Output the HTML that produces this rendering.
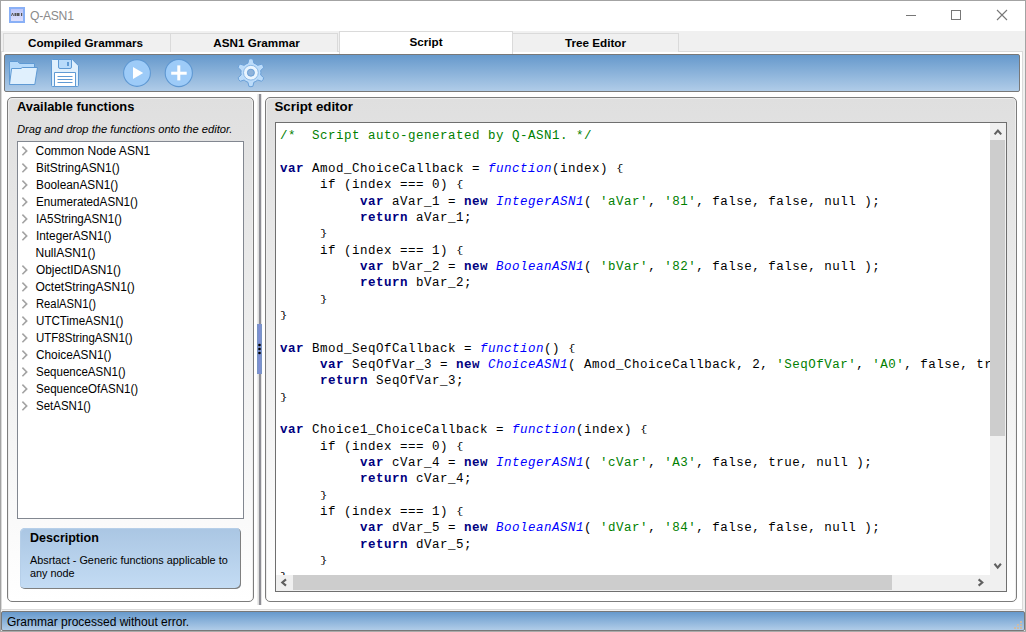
<!DOCTYPE html>
<html><head><meta charset="utf-8">
<style>
*{box-sizing:border-box;margin:0;padding:0}
html,body{width:1026px;height:632px;overflow:hidden;background:#fff;font-family:"Liberation Sans",sans-serif;}
.a{position:absolute}
#win{position:absolute;left:0;top:0;width:1026px;height:632px;border:1px solid #a3a3a3;border-bottom-color:#aaaaaa;background:linear-gradient(#fff 31px,#f0f0f0 31px)}
#tabbar{left:1px;top:31px;width:1024px;height:21px;background:#f0f0f0}
.tab{position:absolute;top:33px;height:19px;border:1px solid #dadada;border-bottom:none;background:#f0f0f0;font-weight:bold;font-size:11.7px;color:#000;text-align:center;line-height:18px}
.tab.sel{top:31px;height:23px;background:#fff;line-height:20px}
#pane{left:1px;top:51px;width:1022px;height:559px;border:1px solid #dadada;background:#fff}
#toolbar{left:4px;top:54px;width:1016px;height:38px;border:1px solid #787878;border-radius:2px;background:linear-gradient(#6699cc,#b0cce8)}
.panel{position:absolute;top:97px;height:505px;border:1px solid #7c7c7c;border-radius:5px;background:linear-gradient(#dfdfdf,#ffffff);box-shadow:inset 1px 1px 0 #eeeeee, inset -1px 0 0 #eeeeee}
.ptitle{position:absolute;font-weight:bold;font-size:13px;color:#000}
#tree{left:17px;top:141px;width:227px;height:378px;border:1px solid #828790;background:#fff}
.ti{position:absolute;left:35.5px;font-size:12px;margin-top:1px;color:#000;white-space:nowrap}
.chev{position:absolute;left:21px;width:7px;height:10px}
#desc{left:20px;top:528px;width:221px;height:61px;border-radius:5px;background:linear-gradient(#aac6e3,#c4dcf4);box-shadow:inset -1px -1px 0 #7f7f7f, inset 1px 1px 0 #b6cfe9}
#editor{left:275px;top:122px;width:732px;height:470px;border:1px solid #6f6f6f;background:#fff;overflow:hidden}
#code{position:absolute;left:4px;top:5.3px;font-family:"Liberation Mono",monospace;font-size:12.5px;letter-spacing:0.5px;line-height:16.33px;white-space:pre;color:#000}
.k{color:#000080;font-weight:bold}
.f{color:#0000ff;font-style:italic}
.s{color:#008000}
.c{color:#008000}
.b{display:inline-block;transform:translateY(-0.7px) scaleY(0.78);transform-origin:50% 55%}
#status{left:1px;top:611px;width:1024px;height:20px;border:1px solid #787878;border-radius:2px;background:linear-gradient(#6699cc,#b0cce8);font-size:12px;color:#000;padding-left:5px;line-height:20px}
</style></head><body>
<div id="win"></div>
<!-- title bar -->
<div class="a" style="left:9px;top:7px;width:16px;height:16px;background:#89b0f6;"></div>
<div class="a" style="left:11px;top:9px;width:12px;height:12px;background:linear-gradient(#bdc6f8,#dfe0fb);"></div>
<svg class="a" style="left:0;top:0" width="30" height="30"><g fill="#555"><path d="M11 16L12 13H13L14 16H13.2L12.5 14L11.8 16Z"/><rect x="14.5" y="13" width="2" height="3"/><rect x="17" y="13" width="2.5" height="3"/><rect x="21" y="13" width="1.2" height="3"/></g></svg>
<div class="a" style="left:29.5px;top:8px;font-size:13.5px;letter-spacing:-0.3px;color:#8a8a8a;transform:scaleX(0.9);transform-origin:0 0">Q-ASN1</div>
<div class="a" style="left:906px;top:15px;width:10px;height:1px;background:#777"></div>
<div class="a" style="left:951px;top:10px;width:10px;height:10px;border:1px solid #777"></div>
<svg class="a" style="left:996px;top:9px" width="12" height="12" viewBox="0 0 12 12"><path d="M1 1L11 11M11 1L1 11" stroke="#777" stroke-width="1.1"/></svg>

<div id="tabbar" class="a"></div>
<div id="pane" class="a"></div>
<div class="tab" style="left:3px;width:168px;padding-right:3px">Compiled Grammars</div>
<div class="tab" style="left:170px;width:168px;padding-left:5px">ASN1 Grammar</div>

<div class="tab sel" style="left:339px;width:174px">Script</div>
<div class="tab" style="left:512px;width:167px">Tree Editor</div>

<div id="toolbar" class="a"></div>
<svg class="a" style="left:0;top:0" width="300" height="95" viewBox="0 0 300 95">
<g stroke="#5f9ad4" stroke-width="1" stroke-linejoin="round">
<path d="M9.5 61.5H17.6L19.6 63.5H34.5V84.5H9.5Z" fill="#b8dbfb"/>
<path d="M11.6 68.5H21L22.2 67.5H37.5L34.8 84.5H9.5Z" fill="#e0f0fd"/>
<path d="M52.5 59.5H72.3L78.5 65.7V85.5Q78.5 86.5 77.5 86.5H52.5Q51.5 86.5 51.5 85.5V60.5Q51.5 59.5 52.5 59.5Z" fill="#e0f0fd"/>
<path d="M58.5 59.5H71.5V67Q71.5 68.5 70 68.5H60Q58.5 68.5 58.5 67Z" fill="#b8dbfb"/>
<rect x="54.5" y="72.5" width="21" height="14" fill="#ffffff"/>
</g>
<rect x="67" y="62" width="2" height="4" fill="#5f9ad4"/>
<path d="M57.5 76.5H72.5M57.5 79.5H72.5M57.5 82.5H72.5" stroke="#5f9ad4" stroke-width="1"/>
<circle cx="137" cy="73" r="13.4" fill="#9dcbf8" stroke="#5f98d2" stroke-width="1.1"/>
<path d="M133 67L143.2 73L133 79Z" fill="#fff"/>
<circle cx="178.8" cy="73" r="13.6" fill="#9dcbf8" stroke="#5f98d2" stroke-width="1.1"/>
<rect x="171.2" y="71.7" width="15.5" height="3" fill="#fff"/>
<rect x="177.3" y="65.4" width="3" height="15" fill="#fff"/>
<path d="M253.86 63.15 L252.95 59.15 Q250.90 58.20 248.85 59.15 L247.94 63.15 A10.0 10.0 0 0 0 244.10 65.36 L240.19 64.15 Q238.34 65.45 238.15 67.70 L241.15 70.48 A10.0 10.0 0 0 0 241.15 74.92 L238.15 77.70 Q238.34 79.95 240.19 81.25 L244.10 80.04 A10.0 10.0 0 0 0 247.94 82.25 L248.85 86.25 Q250.90 87.20 252.95 86.25 L253.86 82.25 A10.0 10.0 0 0 0 257.70 80.04 L261.61 81.25 Q263.46 79.95 263.65 77.70 L260.65 74.92 A10.0 10.0 0 0 0 260.65 70.48 L263.65 67.70 Q263.46 65.45 261.61 64.15 L257.70 65.36 A10.0 10.0 0 0 0 253.86 63.15 Z" fill="#bcdcfa" stroke="#6aa0d8" stroke-width="1" stroke-linejoin="round"/>
<circle cx="250.9" cy="72.7" r="7.4" fill="#eaf5fe" stroke="#8ab8e6" stroke-width="1"/>
<circle cx="250.9" cy="72.7" r="3.5" fill="#8fb3da" stroke="#6aa0d8" stroke-width="1"/>
</svg>

<div class="panel" style="left:7px;width:247px"></div>
<div class="ptitle" style="left:17px;top:99px;font-size:12.85px">Available functions</div>
<div class="a" style="left:17px;top:123px;font-size:11.2px;font-style:italic">Drag and drop the functions onto the editor.</div>
<div id="tree" class="a"></div>
<div class="ti" style="top:143px">Common Node ASN1</div>
<svg class="chev" style="top:146px" viewBox="0 0 7 10"><path d="M1.4 0.6L5.7 4.9L1.4 9.2" fill="none" stroke="#a3a3a3" stroke-width="1.6"/></svg>
<div class="ti" style="top:160px;transform:scaleX(0.987);transform-origin:0 0">BitStringASN1()</div>
<svg class="chev" style="top:163px" viewBox="0 0 7 10"><path d="M1.4 0.6L5.7 4.9L1.4 9.2" fill="none" stroke="#a3a3a3" stroke-width="1.6"/></svg>
<div class="ti" style="top:177px;transform:scaleX(0.985);transform-origin:0 0">BooleanASN1()</div>
<svg class="chev" style="top:180px" viewBox="0 0 7 10"><path d="M1.4 0.6L5.7 4.9L1.4 9.2" fill="none" stroke="#a3a3a3" stroke-width="1.6"/></svg>
<div class="ti" style="top:194px;transform:scaleX(0.973);transform-origin:0 0">EnumeratedASN1()</div>
<svg class="chev" style="top:197px" viewBox="0 0 7 10"><path d="M1.4 0.6L5.7 4.9L1.4 9.2" fill="none" stroke="#a3a3a3" stroke-width="1.6"/></svg>
<div class="ti" style="top:211px;transform:scaleX(0.969);transform-origin:0 0">IA5StringASN1()</div>
<svg class="chev" style="top:214px" viewBox="0 0 7 10"><path d="M1.4 0.6L5.7 4.9L1.4 9.2" fill="none" stroke="#a3a3a3" stroke-width="1.6"/></svg>
<div class="ti" style="top:228px;transform:scaleX(0.983);transform-origin:0 0">IntegerASN1()</div>
<svg class="chev" style="top:231px" viewBox="0 0 7 10"><path d="M1.4 0.6L5.7 4.9L1.4 9.2" fill="none" stroke="#a3a3a3" stroke-width="1.6"/></svg>
<div class="ti" style="top:245px">NullASN1()</div>
<div class="ti" style="top:262px;transform:scaleX(0.986);transform-origin:0 0">ObjectIDASN1()</div>
<svg class="chev" style="top:265px" viewBox="0 0 7 10"><path d="M1.4 0.6L5.7 4.9L1.4 9.2" fill="none" stroke="#a3a3a3" stroke-width="1.6"/></svg>
<div class="ti" style="top:279px">OctetStringASN1()</div>
<svg class="chev" style="top:282px" viewBox="0 0 7 10"><path d="M1.4 0.6L5.7 4.9L1.4 9.2" fill="none" stroke="#a3a3a3" stroke-width="1.6"/></svg>
<div class="ti" style="top:296px;transform:scaleX(0.937);transform-origin:0 0">RealASN1()</div>
<svg class="chev" style="top:299px" viewBox="0 0 7 10"><path d="M1.4 0.6L5.7 4.9L1.4 9.2" fill="none" stroke="#a3a3a3" stroke-width="1.6"/></svg>
<div class="ti" style="top:313px;transform:scaleX(0.968);transform-origin:0 0">UTCTimeASN1()</div>
<svg class="chev" style="top:316px" viewBox="0 0 7 10"><path d="M1.4 0.6L5.7 4.9L1.4 9.2" fill="none" stroke="#a3a3a3" stroke-width="1.6"/></svg>
<div class="ti" style="top:330px;transform:scaleX(0.958);transform-origin:0 0">UTF8StringASN1()</div>
<svg class="chev" style="top:333px" viewBox="0 0 7 10"><path d="M1.4 0.6L5.7 4.9L1.4 9.2" fill="none" stroke="#a3a3a3" stroke-width="1.6"/></svg>
<div class="ti" style="top:347px;transform:scaleX(0.983);transform-origin:0 0">ChoiceASN1()</div>
<svg class="chev" style="top:350px" viewBox="0 0 7 10"><path d="M1.4 0.6L5.7 4.9L1.4 9.2" fill="none" stroke="#a3a3a3" stroke-width="1.6"/></svg>
<div class="ti" style="top:364px;transform:scaleX(0.959);transform-origin:0 0">SequenceASN1()</div>
<svg class="chev" style="top:367px" viewBox="0 0 7 10"><path d="M1.4 0.6L5.7 4.9L1.4 9.2" fill="none" stroke="#a3a3a3" stroke-width="1.6"/></svg>
<div class="ti" style="top:381px;transform:scaleX(0.963);transform-origin:0 0">SequenceOfASN1()</div>
<svg class="chev" style="top:384px" viewBox="0 0 7 10"><path d="M1.4 0.6L5.7 4.9L1.4 9.2" fill="none" stroke="#a3a3a3" stroke-width="1.6"/></svg>
<div class="ti" style="top:398px;transform:scaleX(0.958);transform-origin:0 0">SetASN1()</div>
<svg class="chev" style="top:401px" viewBox="0 0 7 10"><path d="M1.4 0.6L5.7 4.9L1.4 9.2" fill="none" stroke="#a3a3a3" stroke-width="1.6"/></svg>

<div id="desc" class="a"></div>
<div class="a" style="left:30px;top:531px;font-weight:bold;font-size:12.5px">Description</div>
<div class="a" style="left:30px;top:554px;width:210px;font-size:10.85px;line-height:13px">Absrtact - Generic functions applicable to any node</div>

<!-- splitter -->
<div class="a" style="left:257px;top:94px;width:5px;height:511px;background:linear-gradient(90deg,#f3f3f3 0px,#dedede 1.5px,#8e8e95 2px,#8e8e95 4px,#e4e4e4 4px)"></div>
<div class="a" style="left:257px;top:324px;width:5px;height:50px;background:linear-gradient(90deg,#7896c2,#7f8ed6 50%,#7896c2)"></div>
<svg class="a" style="left:250px;top:336px" width="20" height="24"><g fill="#000"><circle cx="9.5" cy="9" r="1.3"/><circle cx="9.5" cy="13" r="1.3"/><circle cx="9.5" cy="17" r="1.3"/></g></svg>

<div class="panel" style="left:265px;width:752px"></div>
<div class="ptitle" style="left:274.5px;top:99px;font-size:13.3px">Script editor</div>
<div id="editor" class="a">
<div id="code"><span class="c">/*  Script auto-generated by Q-ASN1. */</span>

<span class="k">var</span> Amod_ChoiceCallback = <span class="f">function</span>(index) <span class="b">{</span>
     if (index === 0) <span class="b">{</span>
          <span class="k">var</span> aVar_1 = <span class="k">new</span> <span class="f">IntegerASN1</span>( <span class="s">'aVar'</span>, <span class="s">'81'</span>, false, false, null );
          <span class="k">return</span> aVar_1;
     <span class="b">}</span>
     if (index === 1) <span class="b">{</span>
          <span class="k">var</span> bVar_2 = <span class="k">new</span> <span class="f">BooleanASN1</span>( <span class="s">'bVar'</span>, <span class="s">'82'</span>, false, false, null );
          <span class="k">return</span> bVar_2;
     <span class="b">}</span>
<span class="b">}</span>

<span class="k">var</span> Bmod_SeqOfCallback = <span class="f">function</span>() <span class="b">{</span>
     <span class="k">var</span> SeqOfVar_3 = <span class="k">new</span> <span class="f">ChoiceASN1</span>( Amod_ChoiceCallback, 2, <span class="s">'SeqOfVar'</span>, <span class="s">'A0'</span>, false, true, null );
     <span class="k">return</span> SeqOfVar_3;
<span class="b">}</span>

<span class="k">var</span> Choice1_ChoiceCallback = <span class="f">function</span>(index) <span class="b">{</span>
     if (index === 0) <span class="b">{</span>
          <span class="k">var</span> cVar_4 = <span class="k">new</span> <span class="f">IntegerASN1</span>( <span class="s">'cVar'</span>, <span class="s">'A3'</span>, false, true, null );
          <span class="k">return</span> cVar_4;
     <span class="b">}</span>
     if (index === 1) <span class="b">{</span>
          <span class="k">var</span> dVar_5 = <span class="k">new</span> <span class="f">BooleanASN1</span>( <span class="s">'dVar'</span>, <span class="s">'84'</span>, false, false, null );
          <span class="k">return</span> dVar_5;
     <span class="b">}</span>
<span class="b">}</span></div>
</div>
<div class="a" style="left:990px;top:123px;width:16px;height:468px;background:#f0f0f0"></div>
<div class="a" style="left:276px;top:575px;width:714px;height:16px;background:#f0f0f0"></div>
<div class="a" style="left:990px;top:140px;width:15px;height:296px;background:#cdcdcd"></div>
<div class="a" style="left:293px;top:575px;width:599px;height:15px;background:#cdcdcd"></div>
<svg class="a" style="left:0;top:0" width="1026" height="632"><g fill="none" stroke="#606060" stroke-width="2.1" stroke-linejoin="miter"><path d="M994.6 134.4L997.9 130.6L1001.2 134.4"/><path d="M994.5 563.8L997.7 567.6L1000.9 563.8"/><path d="M286 579.4L282.3 582.5L286 585.6"/><path d="M978.6 579.4L982.3 582.5L978.6 585.6"/></g></svg>

<div id="status" class="a">Grammar processed without error.</div>
<svg class="a" style="left:1010px;top:618px" width="16" height="14"><g fill="#cdbba5"><rect x="10" y="3" width="2" height="2"/><rect x="7" y="6" width="2" height="2"/><rect x="10" y="6" width="2" height="2"/><rect x="4" y="9" width="2" height="2"/><rect x="7" y="9" width="2" height="2"/><rect x="10" y="9" width="2" height="2"/></g></svg>
</body></html>
